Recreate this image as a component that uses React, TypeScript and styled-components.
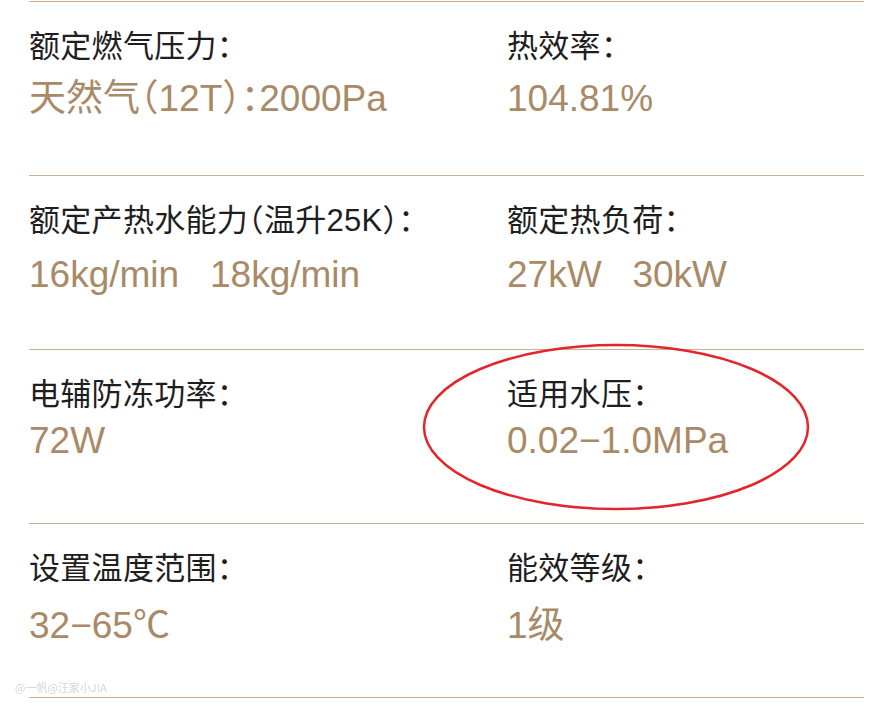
import styled, { createGlobalStyle } from 'styled-components'

interface Spec {
  label: string
  value: string
}

interface RowData {
  gap: number
  cells: [Spec, Spec]
}

const GlobalStyle = createGlobalStyle`
  html, body {
    margin: 0;
    padding: 0;
    background: #ffffff;
  }
  body {
    font-family: 'Liberation Sans', 'Noto Sans CJK SC', sans-serif;
  }
`

const Page = styled.div`
  position: relative;
  width: 883px;
  height: 713px;
  padding: 1px 0 0 29px;
  box-sizing: border-box;
  overflow: hidden;
`

const Table = styled.div`
  width: 835px;
  display: flex;
  flex-direction: column;
  border-bottom: 1px solid #c6b098;
`

const Row = styled.div<{ $gap: number }>`
  height: 174px;
  box-sizing: border-box;
  border-top: 1px solid #c6b098;
  display: grid;
  grid-template-columns: 478px 1fr;
  padding-top: 27px;

  & > div > span + span {
    margin-top: ${(p) => p.$gap}px;
  }
`

const Cell = styled.div`
  display: flex;
  flex-direction: column;
  align-items: flex-start;
`

const Label = styled.span`
  font-size: 31px;
  line-height: 36px;
  color: #1e1e1e;
  font-feature-settings: 'halt';
  letter-spacing: 0.3px;
  white-space: nowrap;
`

const Value = styled.span`
  font-size: 37px;
  line-height: 44px;
  color: #a88a67;
  font-feature-settings: 'halt';
  white-space: pre;
`

const Mark = styled.svg`
  position: absolute;
  left: 0;
  top: 0;
  pointer-events: none;
`

const Watermark = styled.span`
  position: absolute;
  left: 15px;
  top: 681px;
  font-size: 11px;
  line-height: 13px;
  color: #d6d6d6;
  font-family: 'Noto Sans CJK SC', sans-serif;
  filter: blur(0.4px);
`

const rows: RowData[] = [
  {
    gap: 12,
    cells: [
      { label: '额定燃气压力：', value: '天然气（12T）：2000Pa' },
      { label: '热效率：', value: '104.81%' },
    ],
  },
  {
    gap: 14,
    cells: [
      { label: '额定产热水能力（温升25K）：', value: '16kg/min   18kg/min' },
      { label: '额定热负荷：', value: '27kW   30kW' },
    ],
  },
  {
    gap: 6,
    cells: [
      { label: '电辅防冻功率：', value: '72W' },
      { label: '适用水压：', value: '0.02−1.0MPa' },
    ],
  },
  {
    gap: 17,
    cells: [
      { label: '设置温度范围：', value: '32−65℃' },
      { label: '能效等级：', value: '1级' },
    ],
  },
]

export default function App() {
  return (
    <>
      <GlobalStyle />
      <Page>
        <Table>
          {rows.map((row, i) => (
            <Row key={i} $gap={row.gap}>
              {row.cells.map((cell, j) => (
                <Cell key={j}>
                  <Label>{cell.label}</Label>
                  <Value>{cell.value}</Value>
                </Cell>
              ))}
            </Row>
          ))}
        </Table>
        <Mark width="883" height="713" viewBox="0 0 883 713">
          <ellipse cx="616" cy="427" rx="192" ry="82" fill="none" stroke="#e2262b" strokeWidth="2.5" />
        </Mark>
        <Watermark>@一帆@汪家小JIA</Watermark>
      </Page>
    </>
  )
}
